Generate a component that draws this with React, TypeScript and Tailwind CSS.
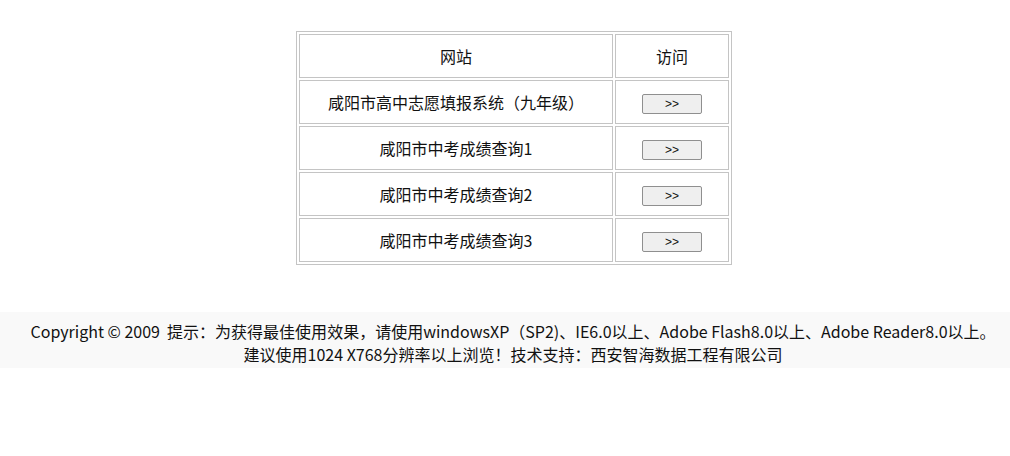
const sites = [
  '咸阳市高中志愿填报系统（九年级）',
  '咸阳市中考成绩查询1',
  '咸阳市中考成绩查询2',
  '咸阳市中考成绩查询3',
];

const cell = 'border border-[#c4c4c4] h-[44px] text-center align-middle p-0';

export default function App() {
  return (
    <div className="min-h-[456px] bg-white text-[16px] text-[#111] font-['Noto_Sans_CJK_SC','Noto_Sans',sans-serif]">
      <div className="pt-[31px] pl-[18px] flex justify-center">
        <table className="border border-[#c4c4c4] border-separate border-spacing-[2px] w-[436px]">
          <tbody>
            <tr>
              <td className={`${cell} w-[314px]`}>网站</td>
              <td className={cell}>访问</td>
            </tr>
            {sites.map((name) => (
              <tr key={name}>
                <td className={cell}>{name}</td>
                <td className={cell}>
                  <button className="w-[60px] h-[20px] bg-[#efefef] border border-[#8f8f8f] rounded-[2px] text-[12px] leading-none align-middle font-['Liberation_Sans',sans-serif]">
                    &gt;&gt;
                  </button>
                </td>
              </tr>
            ))}
          </tbody>
        </table>
      </div>

      <div className="mt-[47px] bg-[#f9f9f9] pt-[8px] pb-[2px] pl-[16px] text-center leading-[23px]">
        <div>Copyright © 2009&nbsp; 提示：为获得最佳使用效果，请使用windowsXP（SP2)、IE6.0以上、Adobe Flash8.0以上、Adobe Reader8.0以上。</div>
        <div>建议使用1024 X768分辨率以上浏览！技术支持：西安智海数据工程有限公司</div>
      </div>
    </div>
  );
}
